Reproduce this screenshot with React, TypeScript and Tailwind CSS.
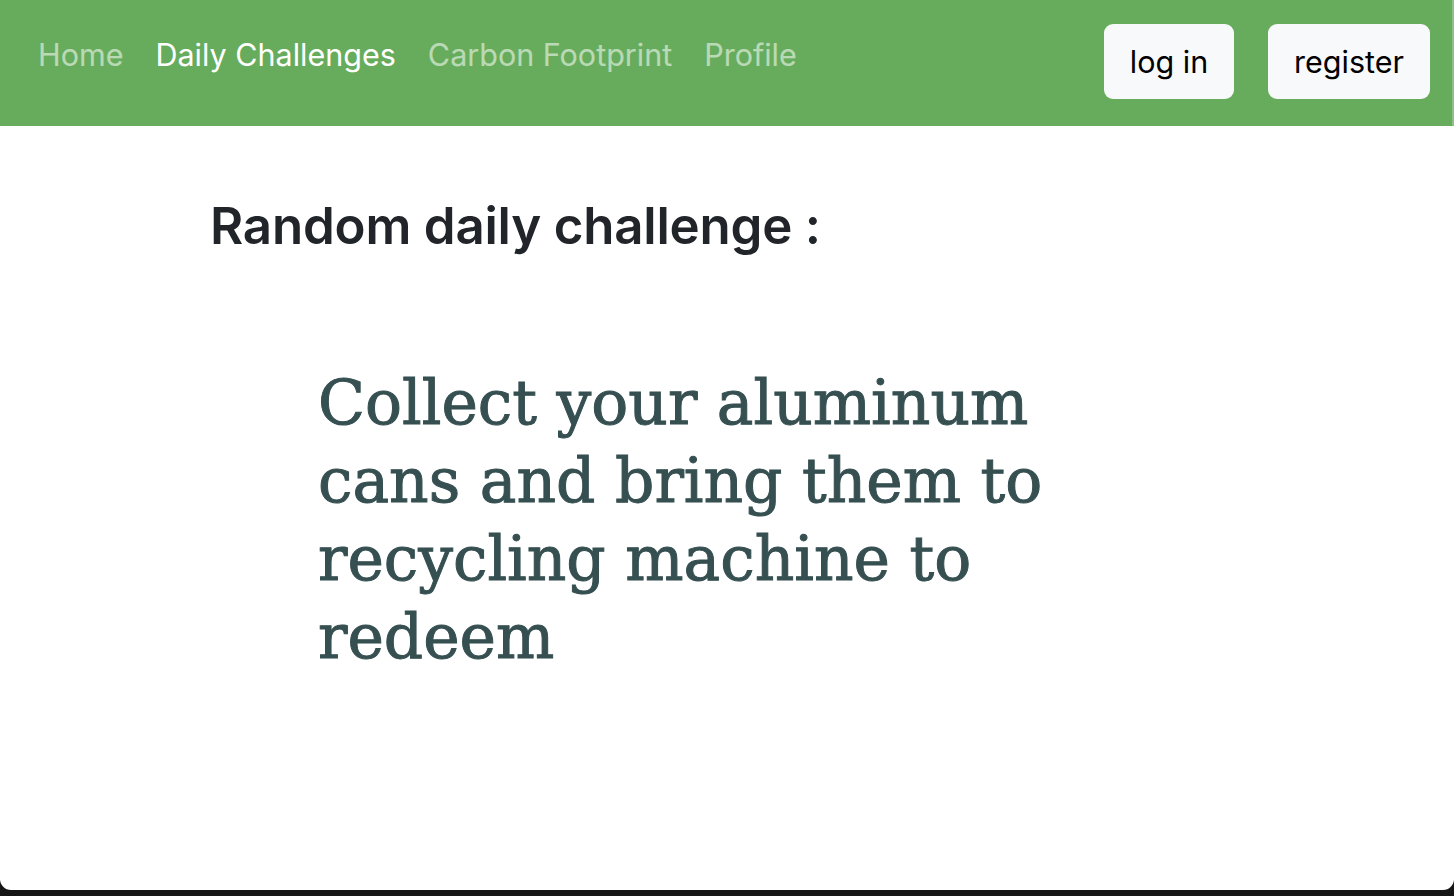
const NAV_LINKS = [
  { label: "Home", active: false },
  { label: "Daily Challenges", active: true },
  { label: "Carbon Footprint", active: false },
  { label: "Profile", active: false },
];

const buttonClasses =
  "h-[75px] rounded-[9px] bg-[#f8f9fa] pt-[2px] text-[30.5px] leading-none text-black";

export default function App() {
  return (
    <div className="flex h-[896px] w-[1454px] flex-col bg-[#161616] font-['Inter',sans-serif]">
      <div className="flex h-[890px] flex-col overflow-hidden rounded-b-[11px] bg-white">
        <nav className="flex h-[126px] shrink-0 items-start justify-between border-r-2 border-[#8dbf86] bg-[#66ac5c] pl-[22px] pr-[22px]">
          <ul className="flex pt-[36px]">
            {NAV_LINKS.map((link) => (
              <li key={link.label}>
                <a
                  href="#"
                  className={
                    link.active
                      ? "block px-[16px] text-[30.5px] leading-[38px] text-white"
                      : "block px-[16px] text-[30.5px] leading-[38px] text-white/55"
                  }
                >
                  {link.label}
                </a>
              </li>
            ))}
          </ul>
          <div className="flex gap-[34px] pt-[24px]">
            <button className={`${buttonClasses} w-[130px]`}>log in</button>
            <button className={`${buttonClasses} w-[162px]`}>register</button>
          </div>
        </nav>
        <main className="pl-[210px] pt-[70px]">
          <h2 className="text-[51px] font-semibold leading-[60px] tracking-[-0.2px] text-[#212529]">
            Random daily challenge :
          </h2>
          <p className="ml-[108px] mt-[108px] font-['DejaVu_Serif',serif] text-[61.5px] leading-[78px] text-[#364f51] [-webkit-text-stroke:1px_#364f51]">
            Collect your aluminum
            <br />
            cans and bring them to
            <br />
            recycling machine to
            <br />
            redeem
          </p>
        </main>
      </div>
    </div>
  );
}
